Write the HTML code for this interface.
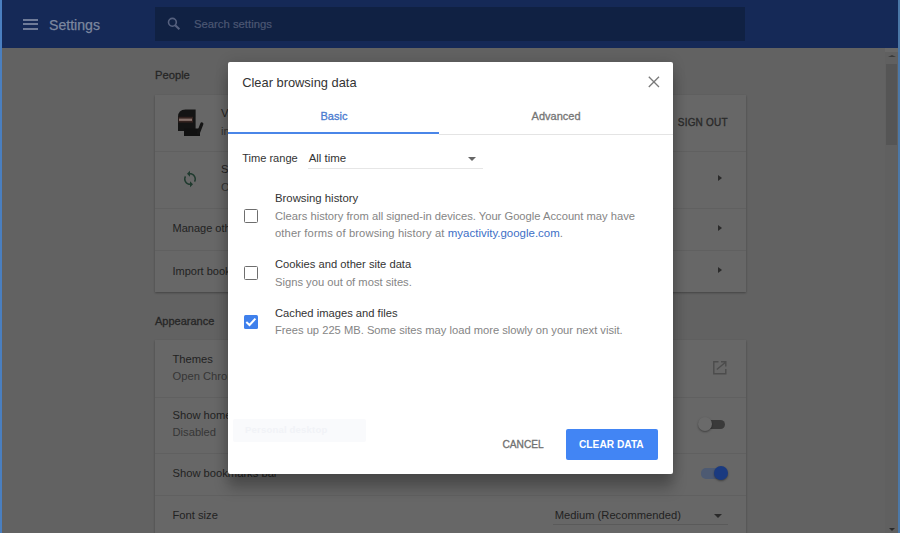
<!DOCTYPE html>
<html><head><meta charset="utf-8"><style>
html,body{margin:0;padding:0;width:900px;height:533px;overflow:hidden;background:#626262}
body{position:relative;font-family:"Liberation Sans",sans-serif}
.t{position:absolute;white-space:nowrap;line-height:1}
.r{position:absolute}
</style></head><body>
<div class="r" style="left:0px;top:0px;width:900px;height:533px;background:#626262;"></div>
<div class="r" style="left:0px;top:0px;width:900px;height:48.4px;background:#152957;"></div>
<div class="r" style="left:23px;top:19px;width:14.5px;height:2px;background:#6f7b98;"></div>
<div class="r" style="left:23px;top:23.3px;width:14.5px;height:2.0px;background:#6f7b98;"></div>
<div class="r" style="left:23px;top:27.7px;width:14.5px;height:2.0px;background:#6f7b98;"></div>
<div class="t" style="left:49px;top:18.06px;font-size:14.1px;color:#7c879f;font-weight:400;-webkit-text-stroke:0.25px #7c879f;">Settings</div>
<div class="r" style="left:155px;top:7px;width:590px;height:34px;background:#102143;"></div>
<svg class="r" style="left:166px;top:16.1px" width="16" height="16" viewBox="0 0 16 16"><circle cx="6.4" cy="6.3" r="3.9" fill="none" stroke="#56617f" stroke-width="1.6"/><path d="M9.2 9.2 L13.4 13.2" stroke="#56617f" stroke-width="2.1"/></svg>
<div class="t" style="left:194px;top:18.83px;font-size:11.3px;color:#4c5773;font-weight:400;-webkit-text-stroke:0.2px #4c5773;">Search settings</div>
<div class="r" style="left:0px;top:0px;width:1.8px;height:533px;background:#4a7fc0;"></div>
<div class="r" style="left:897.5px;top:0px;width:2.5px;height:533px;background:#4b78a8;"></div>
<div class="r" style="left:885px;top:48px;width:13px;height:485px;background:#606060;"></div>
<div class="r" style="left:886.3px;top:64px;width:10.400000000000091px;height:80.6px;background:#555555;"></div>
<div class="r" style="left:885px;top:48px;width:13px;height:4px;background:#686868;"></div>
<div class="r" style="left:888px;top:55px;width:0;height:0;border-bottom:2.5px solid #3a3a3a;border-left:4px solid transparent;border-right:4px solid transparent"></div>
<div class="r" style="left:888.5px;top:527.5px;width:0;height:0;border-top:3.5px solid #2a2a2a;border-left:3.5px solid transparent;border-right:3.5px solid transparent"></div>
<div class="t" style="left:155px;top:70.12px;font-size:11.2px;color:#262626;font-weight:400;-webkit-text-stroke:0.3px #262626;">People</div>
<div class="r" style="left:155px;top:94.5px;width:591px;height:197.3px;background:#676767;box-shadow:0 1px 2px rgba(0,0,0,0.32);"></div>
<div class="r" style="left:155px;top:150.5px;width:591px;height:1.0px;background:#606060;"></div>
<div class="r" style="left:155px;top:207.5px;width:591px;height:1.0px;background:#606060;"></div>
<div class="r" style="left:155px;top:250px;width:591px;height:1px;background:#606060;"></div>
<svg class="r" style="left:170px;top:100px" width="40" height="40" viewBox="0 0 40 40"><path d="M8 17 Q8 9.4 15.5 9.4 H25.6 V31 H8 Z" fill="#141414"/><rect x="8.5" y="16.8" width="14.5" height="5.8" fill="#33221f"/><rect x="9" y="18.6" width="13" height="2.3" fill="#86706a"/><rect x="14" y="28.5" width="16" height="7.5" fill="#111"/><path d="M28.3 33 L31.8 24" stroke="#141414" stroke-width="3.2" stroke-linecap="round"/></svg>
<div class="t" style="left:221px;top:108.02px;font-size:11.2px;color:#222;font-weight:400;">Vasya</div>
<div class="t" style="left:221px;top:126.32px;font-size:11.2px;color:#333;font-weight:400;">info@example.com</div>
<div class="t" style="left:677.8px;top:118.13px;font-size:10.0px;color:#2a2a2a;font-weight:400;-webkit-text-stroke:0.35px #2a2a2a;letter-spacing:0.2px;">SIGN OUT</div>
<svg class="r" style="left:181px;top:170.3px" width="18" height="18" viewBox="0 0 24 24"><path fill="#1f3a2e" d="M12 4V1L8 5l4 4V6c3.310 0 6 2.690 6 6 0 1.010-.25 1.970-.7 2.800l1.460 1.460C19.540 15.030 20 13.570 20 12c0-4.420-3.580-8-8-8zm0 14c-3.310 0-6-2.690-6-6 0-1.010.25-1.970.7-2.800L5.240 7.740C4.460 8.970 4 10.430 4 12c0 4.420 3.580 8 8 8v3l4-4-4-4v3z"/></svg>
<div class="t" style="left:221px;top:164.32px;font-size:11.2px;color:#222;font-weight:400;">Sync</div>
<div class="t" style="left:221px;top:182.32px;font-size:11.2px;color:#333;font-weight:400;">On</div>
<div class="t" style="left:172.5px;top:223.09px;font-size:11.0px;color:#222;font-weight:400;">Manage other people</div>
<div class="t" style="left:172.5px;top:265.99px;font-size:11.0px;color:#222;font-weight:400;">Import bookmarks and settings</div>
<div class="r" style="left:718px;top:175px;width:0;height:0;border-left:4px solid #2a2a2a;border-top:3.5px solid transparent;border-bottom:3.5px solid transparent"></div>
<div class="r" style="left:718px;top:225px;width:0;height:0;border-left:4px solid #2a2a2a;border-top:3.5px solid transparent;border-bottom:3.5px solid transparent"></div>
<div class="r" style="left:718px;top:267px;width:0;height:0;border-left:4px solid #2a2a2a;border-top:3.5px solid transparent;border-bottom:3.5px solid transparent"></div>
<div class="t" style="left:155px;top:316.49px;font-size:11.0px;color:#262626;font-weight:400;-webkit-text-stroke:0.3px #262626;">Appearance</div>
<div class="r" style="left:155px;top:340px;width:591px;height:200px;background:#676767;box-shadow:0 1px 2px rgba(0,0,0,0.32);"></div>
<div class="r" style="left:155px;top:396.7px;width:591px;height:1.0px;background:#606060;"></div>
<div class="r" style="left:155px;top:452.7px;width:591px;height:1.0px;background:#606060;"></div>
<div class="r" style="left:155px;top:494.6px;width:591px;height:1.0px;background:#606060;"></div>
<div class="t" style="left:172.5px;top:354.12px;font-size:11.2px;color:#222;font-weight:400;">Themes</div>
<div class="t" style="left:172.5px;top:371.02px;font-size:11.2px;color:#363636;font-weight:400;">Open Chrome Web Store</div>
<svg class="r" style="left:712px;top:360px" width="16" height="16" viewBox="0 0 16 16"><path d="M6.5 1.8 H1.8 V13.8 H13.8 V9" fill="none" stroke="#4c4c4c" stroke-width="1.4"/><path d="M9 1.8 H13.8 V6.6 M13.5 2.2 L4.8 9.5" fill="none" stroke="#4c4c4c" stroke-width="1.4"/></svg>
<div class="t" style="left:172.5px;top:410.32px;font-size:11.2px;color:#222;font-weight:400;">Show home button</div>
<div class="t" style="left:172.5px;top:427.32px;font-size:11.2px;color:#363636;font-weight:400;">Disabled</div>
<div class="t" style="left:172.5px;top:468.32px;font-size:11.2px;color:#222;font-weight:400;">Show bookmarks bar</div>
<div class="t" style="left:172.5px;top:510.32px;font-size:11.2px;color:#222;font-weight:400;">Font size</div>
<div class="r" style="left:701px;top:419.6px;width:24.399999999999977px;height:9.599999999999966px;background:#3a3a3a;border-radius:5px;"></div>
<div class="r" style="left:698.3px;top:417.4px;width:14.0px;height:14.0px;background:#6a6a6a;border-radius:50%;box-shadow:0 1px 2px rgba(0,0,0,0.4);"></div>
<div class="r" style="left:701px;top:468.4px;width:21px;height:10.200000000000045px;background:#4d5a72;border-radius:5px;"></div>
<div class="r" style="left:714.2px;top:466.3px;width:14.0px;height:14.0px;background:#1a3a80;border-radius:50%;box-shadow:0 1px 2px rgba(0,0,0,0.4);"></div>
<div class="t" style="left:554.7px;top:510.12px;font-size:11.2px;color:#222;font-weight:400;">Medium (Recommended)</div>
<div class="r" style="left:714px;top:514px;width:0;height:0;border-top:4px solid #2a2a2a;border-left:4.5px solid transparent;border-right:4.5px solid transparent"></div>
<div class="r" style="left:553px;top:524px;width:175px;height:1px;background:#5a5a5a;"></div>
<div class="r" style="left:228px;top:62.4px;width:445px;height:411.2px;background:#fff;border-radius:2px;box-shadow:0 0 14px rgba(0,0,0,0.14), 0 14px 14px rgba(0,0,0,0.26)"></div>
<div class="t" style="left:242.2px;top:76.91px;font-size:12.86px;color:#333;font-weight:400;">Clear browsing data</div>
<svg class="r" style="left:647px;top:75px" width="14" height="14" viewBox="0 0 14 14"><path d="M1.8 1.8 L12 12 M12 1.8 L1.8 12" stroke="#7a7a7a" stroke-width="1.3"/></svg>
<div class="t" style="left:320.5px;top:111.09px;font-size:11.0px;color:#4a7bd0;font-weight:400;-webkit-text-stroke:0.3px #4a7bd0;">Basic</div>
<div class="t" style="left:531.6px;top:111.49px;font-size:11.0px;color:#757575;font-weight:400;-webkit-text-stroke:0.3px #757575;">Advanced</div>
<div class="r" style="left:439px;top:134px;width:234px;height:1px;background:#e4e4e4;"></div>
<div class="r" style="left:228px;top:132px;width:211px;height:2px;background:#4a86e8;"></div>
<div class="t" style="left:242.2px;top:152.93px;font-size:11.07px;color:#333;font-weight:400;">Time range</div>
<div class="t" style="left:308.7px;top:152.61px;font-size:11.45px;color:#333;font-weight:400;">All time</div>
<div class="r" style="left:308px;top:168px;width:174.5px;height:1px;background:#e6e6e6;"></div>
<div class="r" style="left:467.6px;top:157px;width:0;height:0;border-top:4.7px solid #666;border-left:4.4px solid transparent;border-right:4.4px solid transparent"></div>
<div class="r" style="left:244px;top:209.2px;width:13.5px;height:13.5px;background:transparent;border:1.9px solid #6e6e6e;box-sizing:border-box;border-radius:1.5px;"></div>
<div class="r" style="left:244px;top:266.4px;width:13.800000000000011px;height:13.800000000000011px;background:transparent;border:1.9px solid #6e6e6e;box-sizing:border-box;border-radius:1.5px;"></div>
<div class="r" style="left:244px;top:314.7px;width:14px;height:14.0px;background:#3f80ec;border-radius:1.5px;"></div>
<svg class="r" style="left:244px;top:314.7px" width="14" height="14" viewBox="0 0 14 14"><path d="M2.3 7 L5.5 10 L11.4 3.6" fill="none" stroke="#fff" stroke-width="2"/></svg>
<div class="t" style="left:275px;top:193.29px;font-size:11.35px;color:#333;font-weight:400;">Browsing history</div>
<div class="t" style="left:275px;top:210.72px;font-size:11.2px;color:#858585;font-weight:400;">Clears history from all signed-in devices. Your Google Account may have</div>
<div class="t" style="left:275px;top:228.12px;font-size:11.2px;color:#858585;font-weight:400;letter-spacing:0.12px;">other forms of browsing history at</div>
<div class="t" style="left:447.8px;top:227.89px;font-size:11.47px;color:#858585;font-weight:400;"><span style="color:#3d6fc6">myactivity.google.com</span>.</div>
<div class="t" style="left:275px;top:259.32px;font-size:11.2px;color:#333;font-weight:400;">Cookies and other site data</div>
<div class="t" style="left:275px;top:276.82px;font-size:11.2px;color:#858585;font-weight:400;">Signs you out of most sites.</div>
<div class="t" style="left:275px;top:308.02px;font-size:11.2px;color:#333;font-weight:400;">Cached images and files</div>
<div class="t" style="left:275px;top:325.34px;font-size:11.18px;color:#858585;font-weight:400;">Frees up 225 MB. Some sites may load more slowly on your next visit.</div>
<div class="r" style="left:233px;top:419px;width:133px;height:23px;background:#f9fafc;border-radius:2px;"></div>
<div class="t" style="left:245px;top:424.76px;font-size:9.5px;color:#f1f3f7;font-weight:700;letter-spacing:0.2px;">Personal desktop</div>
<div class="t" style="left:502.4px;top:439.77px;font-size:10.2px;color:#707070;font-weight:400;-webkit-text-stroke:0.3px #707070;">CANCEL</div>
<div class="r" style="left:566px;top:429px;width:92px;height:31px;background:#4285f4;border-radius:2px;"></div>
<div class="t" style="left:579px;top:440.07px;font-size:10.2px;color:#fff;font-weight:700;">CLEAR DATA</div>
</body></html>
